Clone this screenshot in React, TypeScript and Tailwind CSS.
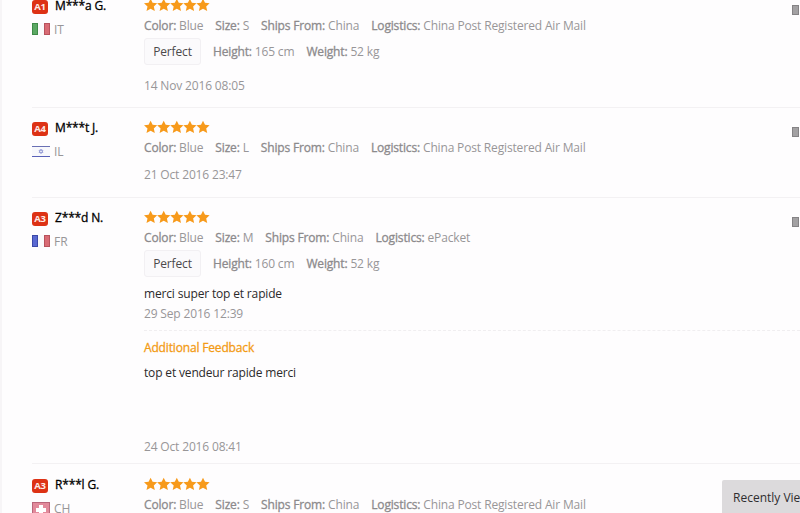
import React from 'react';

interface Review {
  level: string;
  name: string;
  country: string;
  size: string;
  logistics: string;
  height?: string;
  weight?: string;
  comment?: string;
  date?: string;
  additional?: { text: string; date: string };
  className: string;
}

const reviews: Review[] = [
  {
    level: 'A1',
    name: 'M***a G.',
    country: 'IT',
    size: 'S',
    logistics: 'China Post Registered Air Mail',
    height: '165 cm',
    weight: '52 kg',
    date: '14 Nov 2016 08:05',
    className: 'h-[122px]',
  },
  {
    level: 'A4',
    name: 'M***t J.',
    country: 'IL',
    size: 'L',
    logistics: 'China Post Registered Air Mail',
    date: '21 Oct 2016 23:47',
    className: 'h-[90px]',
  },
  {
    level: 'A3',
    name: 'Z***d N.',
    country: 'FR',
    size: 'M',
    logistics: 'ePacket',
    height: '160 cm',
    weight: '52 kg',
    comment: 'merci super top et rapide',
    date: '29 Sep 2016 12:39',
    additional: { text: 'top et vendeur rapide merci', date: '24 Oct 2016 08:41' },
    className: 'h-[266px]',
  },
  {
    level: 'A3',
    name: 'R***l G.',
    country: 'CH',
    size: 'S',
    logistics: 'China Post Registered Air Mail',
    className: 'h-[90px] pt-px',
  },
];

function Flag({ country }: { country: string }) {
  return (
    <svg width="18" height="12" viewBox="0 0 18 12" shapeRendering="crispEdges">
      {country === 'IT' && (
        <>
          <rect width="6" height="12" fill="#3f8a48" />
          <rect x="1" y="1" width="4" height="10" fill="#5ba863" />
          <rect x="6" width="6" height="12" fill="#fbfafb" />
          <rect x="12" width="6" height="12" fill="#b8525c" />
          <rect x="13" y="1" width="4" height="10" fill="#d96b74" />
        </>
      )}
      {country === 'FR' && (
        <>
          <rect width="6" height="12" fill="#3c49a8" />
          <rect x="1" y="1" width="4" height="10" fill="#5a69d2" />
          <rect x="6" width="6" height="12" fill="#fbfafb" />
          <rect x="12" width="6" height="12" fill="#b8525c" />
          <rect x="13" y="1" width="4" height="10" fill="#d96b74" />
        </>
      )}
      {country === 'IL' && (
        <>
          <rect y="1" width="18" height="11" fill="#f8f8fc" />
          <rect y="1" width="18" height="1" fill="#6a70b4" />
          <rect y="11" width="18" height="1" fill="#5a61b8" />
          <path
            d="M9 4l2 3.5H7zM9 8.8L7 5.3h4z"
            fill="none"
            stroke="#8d94d2"
            strokeWidth=".7"
            shapeRendering="auto"
          />
        </>
      )}
      {country === 'CH' && (
        <>
          <rect width="18" height="12" fill="#b9667a" />
          <rect x="1" y="1" width="16" height="11" fill="#e28a9b" />
          <path d="M7 3h4v3h3v4h-3v2H7v-2H4V6h3z" fill="#fff" />
        </>
      )}
    </svg>
  );
}

function Stars() {
  return (
    <svg className="block" width="67" height="14" viewBox="0 0 67 14" fill="#f79a1b">
      {[0, 13.1, 26.2, 39.3, 52.4].map((x) => (
        <path
          key={x}
          transform={`translate(${x} 0.6)`}
          d="M6.6 .1l2 4.1 4.6.5-3.4 3.1 1 4.6-4.2-2.3-4.1 2.3 1-4.6L0 4.7l4.6-.5z"
        />
      ))}
    </svg>
  );
}

function Detail({ label, value }: { label: string; value: string }) {
  return (
    <span>
      <span className="text-[#8c8a8c] [-webkit-text-stroke:0.3px_#8c8a8c]">{label}:</span> {value}
    </span>
  );
}

function ReviewRow({ review }: { review: Review }) {
  return (
    <div className={`flex shrink-0 border-b border-[#f3f1f3] ${review.className}`}>
      {/* Buyer */}
      <div className="w-28 shrink-0 pt-2.5">
        <div className="flex h-5 items-center gap-[7px]">
          <span className="mt-px flex h-3.5 w-4 items-center justify-center rounded-[3px] bg-[#dd3215] text-[9.5px] font-bold text-[#fdeae6]">
            {review.level}
          </span>
          <span className="text-black [-webkit-text-stroke:0.3px_#000]">{review.name}</span>
        </div>
        <div className="mt-[3px] flex h-5 items-center gap-1 tracking-normal">
          <Flag country={review.country} />
          <span className="pt-0.5">{review.country}</span>
        </div>
      </div>

      {/* Feedback */}
      <div className="flex-1 pt-3">
        <Stars />
        <div className="mt-1 flex gap-3">
          <Detail label="Color" value="Blue" />
          <Detail label="Size" value={review.size} />
          <Detail label="Ships From" value="China" />
          <Detail label="Logistics" value={review.logistics} />
        </div>
        {review.height && review.weight && (
          <div className="mt-0.5 flex items-center gap-3">
            <span className="flex h-[27px] w-[57px] items-center justify-center rounded-[3px] border border-[#f2f0f3] bg-[#fbfafc] text-[#4b494b]">
              Perfect
            </span>
            <Detail label="Height" value={review.height} />
            <Detail label="Weight" value={review.weight} />
          </div>
        )}
        {review.comment && <p className="mt-[7px] text-[#2b2a2b]">{review.comment}</p>}
        {review.date && (
          <p className={review.comment ? '' : review.height ? 'mt-[11px]' : 'mt-[7px]'}>
            {review.date}
          </p>
        )}
        {review.additional && (
          <div className="mt-1.5 border-t border-dashed border-[#f0eef0] pt-[7px]">
            <p className="text-[#f39b14] [-webkit-text-stroke:0.3px_#f39b14]">Additional Feedback</p>
            <p className="mt-[5px] text-[#2b2a2b]">{review.additional.text}</p>
            <p className="mt-[54px]">{review.additional.date}</p>
          </div>
        )}
      </div>

      {/* Photo thumb at the edge of the row */}
      <div className="mt-[19px] mr-px -ml-2 h-2.5 w-[7px] shrink-0 border border-[#858385] bg-[#a3a1a3]" />
    </div>
  );
}

export default function App() {
  return (
    <div className="relative h-[513px] w-[800px] overflow-hidden border-l-2 border-[#f7f5f7] bg-[#fefdfe] font-['Open_Sans','Noto_Sans',sans-serif] text-[12px] leading-5 tracking-[-0.16px] whitespace-nowrap text-[#989698]">
      <div className="-mt-3.5 flex flex-col pl-[30px]">
        {reviews.map((review) => (
          <ReviewRow key={review.name} review={review} />
        ))}
      </div>
      <div className="absolute top-[480px] left-[720px] h-[33px] w-[100px] rounded-tl-[2px] bg-[#dcdadc] pt-2 pl-[11px] tracking-normal text-[#2f2d2f]">
        Recently Viewed
      </div>
    </div>
  );
}
